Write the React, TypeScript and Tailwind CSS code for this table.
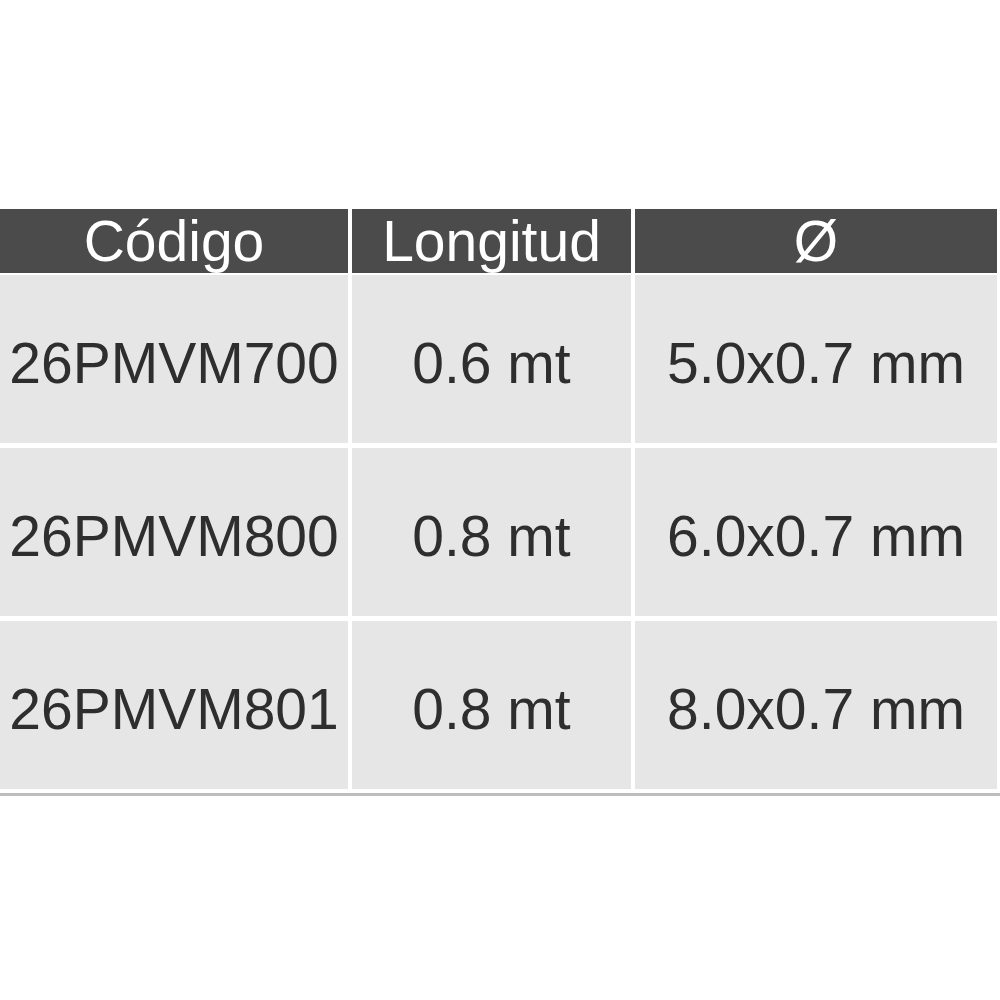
const rows = [
  { code: '26PMVM700', len: '0.6 mt', dia: '5.0x0.7 mm' },
  { code: '26PMVM800', len: '0.8 mt', dia: '6.0x0.7 mm' },
  { code: '26PMVM801', len: '0.8 mt', dia: '8.0x0.7 mm' },
]

export default function App() {
  return (
    <div className="w-[1000px] h-[1000px] bg-white pt-[209px] font-['Liberation_Sans',Arial,sans-serif]">
      <div className="grid grid-cols-[348px_279px_362px] gap-x-[4px] w-[997px] h-[64px] text-[57px] text-white leading-none">
        <div className="bg-[#4b4b4b] flex items-center justify-center">Código</div>
        <div className="bg-[#4b4b4b] flex items-center justify-center">Longitud</div>
        <div className="bg-[#4b4b4b] flex items-center justify-center">Ø</div>
      </div>
      <div className="mt-[2px] flex flex-col gap-y-[5px] w-[997px] text-[57px] text-[#2e2e2e] leading-none">
        {rows.map(r => (
          <div key={r.code} className="grid grid-cols-[348px_279px_362px] gap-x-[4px] h-[168px]">
            <div className="bg-[#e6e6e6] flex items-center justify-center pt-[8px]">{r.code}</div>
            <div className="bg-[#e6e6e6] flex items-center justify-center pt-[8px]">{r.len}</div>
            <div className="bg-[#e6e6e6] flex items-center justify-center pt-[8px]">{r.dia}</div>
          </div>
        ))}
      </div>
      <div className="mt-[4px] h-[3px] bg-[#bdbdbd]" />
    </div>
  )
}
